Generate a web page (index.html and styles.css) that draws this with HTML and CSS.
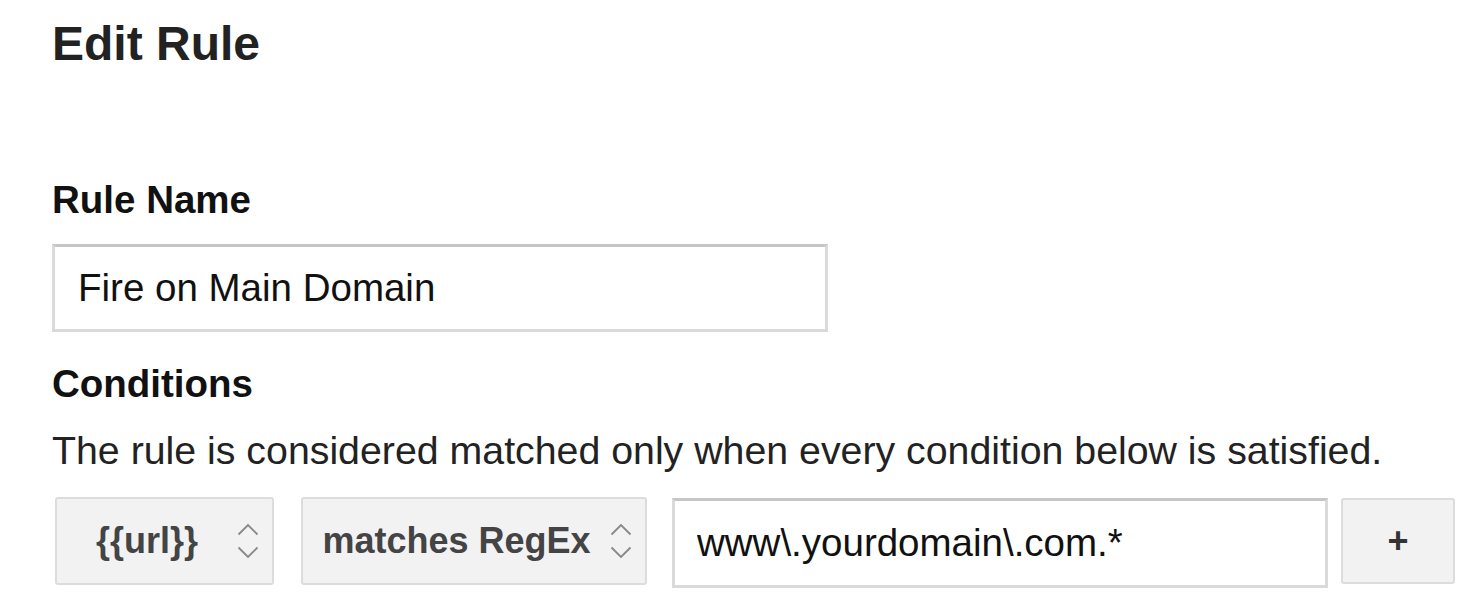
FILE: index.html
```html
<!DOCTYPE html>
<html lang="en">
<head>
    <meta charset="UTF-8">
    <title>Edit Rule</title>
    <link rel="stylesheet" href="styles.css">
</head>
<body>
    <div class="container">
        <h1>Edit Rule</h1>

        <label class="field-label" for="rule-name">Rule Name</label>
        <input type="text" id="rule-name" class="text-input name-input" value="Fire on Main Domain" />

        <h2 class="field-label conditions-label">Conditions</h2>
        <p class="hint">The rule is considered matched only when every condition below is satisfied.</p>

        <div class="condition-row">
            <div class="select select-var">
                <span class="select-value">{{url}}</span>
                <svg class="select-arrows" width="22" height="38" viewBox="0 0 22 38">
                    <path d="M1.5 12.5 L11 3 L20.5 12.5" />
                    <path d="M1.5 25.5 L11 35 L20.5 25.5" />
                </svg>
            </div>
            <div class="select select-op">
                <span class="select-value">matches RegEx</span>
                <svg class="select-arrows" width="22" height="38" viewBox="0 0 22 38">
                    <path d="M1.5 12.5 L11 3 L20.5 12.5" />
                    <path d="M1.5 25.5 L11 35 L20.5 25.5" />
                </svg>
            </div>
            <input type="text" class="text-input value-input" value="www\.yourdomain\.com.*" />
            <button class="add-button">+</button>
        </div>
    </div>
</body>
</html>
```

FILE: styles.css
```css
body {
    margin: 0;
    padding: 0;
    background-color: #ffffff;
    font-family: 'Liberation Sans', Arial, sans-serif;
    color: #1f1f1f;
}

.container {
    padding: 16px 0 0 52px;
    display: flex;
    flex-direction: column;
    align-items: flex-start;
}

h1 {
    margin: 0;
    font-size: 48px;
    line-height: 56px;
    font-weight: bold;
    color: #222;
}

.field-label {
    display: block;
    margin: 106px 0 0 0;
    font-size: 38.5px;
    line-height: 44px;
    font-weight: bold;
    color: #111;
}

.conditions-label {
    margin-top: 30px;
}

.hint {
    margin: 22px 0 0 0;
    font-size: 39.3px;
    line-height: 44px;
    color: #222;
}

.text-input {
    box-sizing: border-box;
    height: 88px;
    margin: 0;
    padding: 0 0 0 23px;
    border: 3px solid #dadada;
    border-top-color: #c6c6c6;
    border-radius: 0;
    background-color: #fff;
    font-family: 'Liberation Sans', Arial, sans-serif;
    font-size: 38.5px;
    color: #111;
    outline: none;
}

.name-input {
    width: 776px;
    margin-top: 22px;
}

.condition-row {
    display: flex;
    align-items: flex-start;
    margin: 25px 0 0 3px;
}

.select {
    box-sizing: border-box;
    display: flex;
    align-items: center;
    height: 88px;
    border: 2px solid #dcdcdc;
    border-radius: 3px;
    background-color: #f2f2f2;
    color: #444;
    font-size: 36px;
    font-weight: bold;
}

.select-var {
    width: 219px;
    margin-right: 27px;
}

.select-op {
    width: 346px;
    margin-right: 25px;
}

.select-value {
    flex: 1;
    text-align: center;
    white-space: nowrap;
}

.select-arrows {
    margin-right: 13px;
    fill: none;
    stroke: #888;
    stroke-width: 1.8;
}

.value-input {
    width: 656px;
    height: 90px;
    padding-left: 22px;
    margin-top: 1px;
    margin-right: 13px;
}

.add-button {
    box-sizing: border-box;
    width: 114px;
    height: 86px;
    margin-top: 1px;
    padding: 0;
    border: 2px solid #dcdcdc;
    border-radius: 3px;
    background-color: #f2f2f2;
    color: #333;
    font-family: 'Liberation Sans', Arial, sans-serif;
    font-size: 36px;
    font-weight: bold;
    cursor: pointer;
}
```
